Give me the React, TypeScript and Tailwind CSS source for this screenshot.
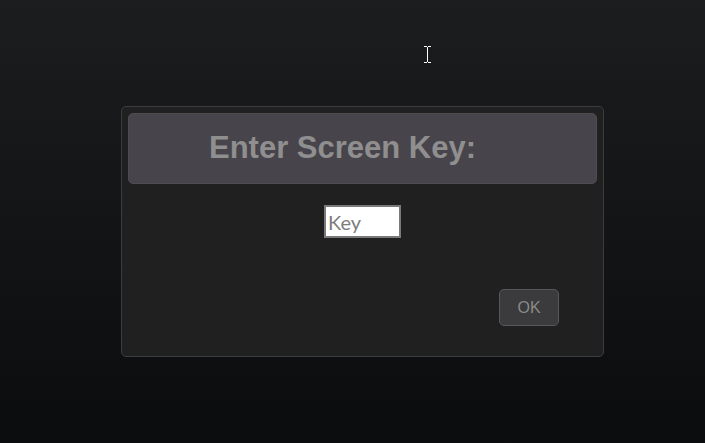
import { useState } from 'react'

const IBeam = () => (
  <svg width="9" height="17" viewBox="0 0 9 17" className="absolute left-[423px] top-[46px]">
    <path d="M1 0.5h3M5 0.5h3M4.5 1v15M1 16.5h3M5 16.5h3" stroke="#ffffff" strokeWidth="1" fill="none" />
  </svg>
)

export default function App() {
  const [key, setKey] = useState('')

  return (
    <div className="relative h-[443px] w-[705px] overflow-hidden bg-gradient-to-b from-[#1b1d1f] to-[#0b0c0e] pt-[106px] pl-[121px]">
      <IBeam />
      <div className="flex h-[251px] w-[483px] flex-col rounded-[5px] border border-[#3d3d3f] bg-[#202020] px-[6px] pt-[6px]">
        <div className="flex h-[71px] items-center justify-center rounded-[5px] border border-[#4e4b51] bg-[#48444b] pr-[40px]">
          <h1 className="font-['Liberation_Sans',Arial,sans-serif] text-[31px] font-bold text-[#8f8f8f]">
            Enter Screen Key:
          </h1>
        </div>
        <div className="mt-[21px] flex justify-center">
          <input
            value={key}
            onChange={(e) => setKey(e.target.value)}
            placeholder="Key"
            className="h-[33px] w-[77px] border-2 border-[#7a7a7a] bg-white px-[2px] font-['Lato',sans-serif] text-[20px] text-[#333] outline-none placeholder:text-[#7d7d7d]"
          />
        </div>
        <div className="mt-[51px] flex justify-end pr-[38px]">
          <button
            type="button"
            className="h-[37px] w-[60px] rounded-[5px] border border-[#58565a] bg-[#3b3a3c] font-['Liberation_Sans',Arial,sans-serif] text-[16px] text-[#8a8a8a]"
          >
            OK
          </button>
        </div>
      </div>
    </div>
  )
}
